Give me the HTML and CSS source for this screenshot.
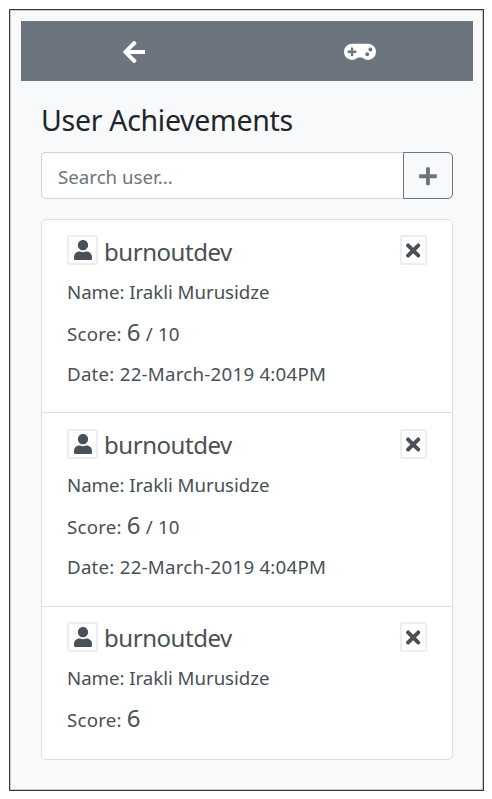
FILE: index.html
```html
<!DOCTYPE html>
<html lang="en">
<head>
<meta charset="utf-8">
<title>User Achievements</title>
<link rel="stylesheet" href="styles.css">
</head>
<body>
<svg class="sprite" aria-hidden="true">
  <symbol id="user" viewBox="0 0 448 512"><path d="M224 256c70.7 0 128-57.3 128-128S294.7 0 224 0 96 57.3 96 128s57.3 128 128 128zm89.6 32h-16.7c-22.2 10.2-46.9 16-72.9 16s-50.6-5.8-72.9-16h-16.7C60.2 288 0 348.2 0 422.4V464c0 26.5 21.5 48 48 48h352c26.5 0 48-21.5 48-48v-41.6c0-74.2-60.2-134.4-134.4-134.4z"/></symbol>
  <symbol id="times" viewBox="0 0 352 512"><path d="M242.72 256l100.07-100.07c12.28-12.28 12.28-32.19 0-44.48l-22.24-22.24c-12.28-12.28-32.19-12.28-44.48 0L176 189.28 75.93 89.21c-12.28-12.28-32.19-12.28-44.48 0L9.21 111.45c-12.28 12.28-12.28 32.19 0 44.48L109.28 256 9.21 356.07c-12.28 12.28-12.28 32.19 0 44.48l22.24 22.24c12.28 12.28 32.2 12.28 44.48 0L176 322.72l100.07 100.07c12.28 12.28 32.2 12.28 44.48 0l22.24-22.24c12.28-12.28 12.28-32.19 0-44.48L242.72 256z"/></symbol>
</svg>
<main class="frame">
  <nav class="nav">
    <a class="nav-item"><svg class="icon-arrow" viewBox="0 0 448 512"><path d="M257.5 445.1l-22.2 22.2c-9.4 9.4-24.6 9.4-33.9 0L7 273c-9.4-9.4-9.4-24.6 0-33.9L201.4 44.7c9.4-9.4 24.6-9.4 33.9 0l22.2 22.2c9.5 9.5 9.3 25-.4 34.3L136.6 216H424c13.3 0 24 10.7 24 24v32c0 13.3-10.7 24-24 24H136.6l120.5 114.8c9.8 9.3 10 24.8.4 34.3z"/></svg></a>
    <a class="nav-item"><svg class="icon-gamepad" viewBox="0 0 640 512"><path d="M480.07 96H160a160 160 0 1 0 114.24 272h91.5A160 160 0 1 0 480.07 96zM248 268a12 12 0 0 1-12 12h-52v52a12 12 0 0 1-12 12h-24a12 12 0 0 1-12-12v-52H84a12 12 0 0 1-12-12v-24a12 12 0 0 1 12-12h52v-52a12 12 0 0 1 12-12h24a12 12 0 0 1 12 12v52h52a12 12 0 0 1 12 12zm216 76a40 40 0 1 1 40-40 40 40 0 0 1-40 40zm64-96a40 40 0 1 1 40-40 40 40 0 0 1-40 40z"/></svg></a>
  </nav>
  <section class="content">
    <h1 class="title">User Achievements</h1>
    <div class="search">
      <input class="search-input" type="text" placeholder="Search user...">
      <button class="search-add" aria-label="Add"><svg class="icon-plus" viewBox="0 0 448 512"><path d="M416 208H272V64c0-17.67-14.33-32-32-32h-32c-17.67 0-32 14.33-32 32v144H32c-17.67 0-32 14.33-32 32v32c0 17.67 14.33 32 32 32h144v144c0 17.67 14.33 32 32 32h32c17.67 0 32-14.33 32-32V304h144c17.67 0 32-14.33 32-32v-32c0-17.67-14.33-32-32-32z"/></svg></button>
    </div>
    <ul class="list">
      <li class="item">
        <header class="item-head">
          <span class="box box-user"><svg class="icon-user"><use href="#user"/></svg></span>
          <h2 class="username">burnoutdev</h2>
          <span class="box box-close"><svg class="icon-times"><use href="#times"/></svg></span>
        </header>
        <p class="line name">Name: Irakli Murusidze</p>
        <p class="line score">Score: <span class="points">6</span> / 10</p>
        <p class="line date">Date: 22-March-2019 4:04PM</p>
      </li>
      <li class="item">
        <header class="item-head">
          <span class="box box-user"><svg class="icon-user"><use href="#user"/></svg></span>
          <h2 class="username">burnoutdev</h2>
          <span class="box box-close"><svg class="icon-times"><use href="#times"/></svg></span>
        </header>
        <p class="line name">Name: Irakli Murusidze</p>
        <p class="line score">Score: <span class="points">6</span> / 10</p>
        <p class="line date">Date: 22-March-2019 4:04PM</p>
      </li>
      <li class="item">
        <header class="item-head">
          <span class="box box-user"><svg class="icon-user"><use href="#user"/></svg></span>
          <h2 class="username">burnoutdev</h2>
          <span class="box box-close"><svg class="icon-times"><use href="#times"/></svg></span>
        </header>
        <p class="line name">Name: Irakli Murusidze</p>
        <p class="line score">Score: <span class="points">6</span></p>
      </li>
    </ul>
  </section>
</main>
</body>
</html>
```
FILE: styles.css
```css
* { box-sizing: border-box; }
body {
  margin: 0;
  padding: 9px 8px 8px 9px;
  background: #fff;
  color: #212529;
  font-family: "Noto Sans", "Open Sans", sans-serif;
}
svg { display: block; fill: currentColor; }
.sprite { display: none; }
.frame {
  height: 782px;
  padding: 10px;
  border: 1px solid #343a40;
  box-shadow: inset 0 0 0 1px #c3c5c9;
  background: #f8f9fb;
}
.nav {
  display: flex;
  height: 60px;
  margin: 1px 0 0 1px;
  background: #6c757d;
  color: #fff;
}
.nav-item {
  flex: 1;
  display: flex;
  align-items: center;
  justify-content: center;
  padding-top: 1px;
}
.icon-arrow { width: 22.8px; height: 26px; }
.icon-gamepad { width: 32px; height: 25.6px; }
.content { padding: 20px 20px 0 21px; }
.title {
  margin: 0 0 11px;
  height: 40px;
  font-size: 28.5px;
  line-height: 39px;
  font-weight: 400;
  letter-spacing: -0.3px;
  white-space: nowrap;
}
.search { display: flex; height: 47px; }
.search-input {
  flex: 1;
  min-width: 0;
  padding: 2px 16px 0;
  border: 1px solid #ced4da;
  border-right: 0;
  border-radius: 5px 0 0 5px;
  background: #fff;
  font: 18.7px "Noto Sans", "Open Sans", sans-serif;
}
.search-input::placeholder { color: #6c757d; opacity: 1; }
.search-add {
  display: flex;
  align-items: center;
  justify-content: center;
  width: 50px;
  padding: 2px 0 0;
  border: 1px solid #6c757d;
  border-radius: 0 5px 5px 0;
  background: transparent;
  color: #6c757d;
}
.icon-plus { width: 17.9px; height: 20.5px; }
.list {
  margin: 20px 0 0;
  padding: 0;
  height: 541px;
  list-style: none;
  border: 1px solid #dfdfdf;
  border-radius: 5px;
  background: #fff;
  color: #495057;
}
.item {
  height: 193px;
  padding: 15px 25px 0;
}
.item:first-child { height: 192px; }
.item + .item { padding-top: 16px; border-top: 1px solid #dfdfdf; }
.item + .item + .item { padding-top: 15px; }
.item:nth-child(2) { height: 194px; }
.item-head { display: flex; height: 30px; }
.box {
  display: flex;
  align-items: center;
  justify-content: center;
  height: 30px;
  border: 2px solid #eee;
  border-radius: 2px;
}
.box-user { width: 31px; }
.box-close { width: 27px; margin-left: auto; padding-top: 1px; }
.icon-user { width: 18px; height: 20.5px; }
.icon-times { width: 14.4px; height: 21px; }
.username {
  margin: 0 0 0 6px;
  font-size: 24px;
  line-height: 34px;
  font-weight: 400;
  letter-spacing: -0.45px;
}
.line {
  margin: 0;
  font-size: 18.7px;
  line-height: 40px;
  height: 40px;
  white-space: nowrap;
}
.name { margin-top: 7px; letter-spacing: -0.05px; }
.item + .item .username { line-height: 32px; }
.item + .item .name { margin-top: 6px; }
.score { height: 42px; padding-top: 2px; letter-spacing: 0.2px; }
.date { letter-spacing: 0.24px; }
.points { font-size: 24px; line-height: 1; }
```
